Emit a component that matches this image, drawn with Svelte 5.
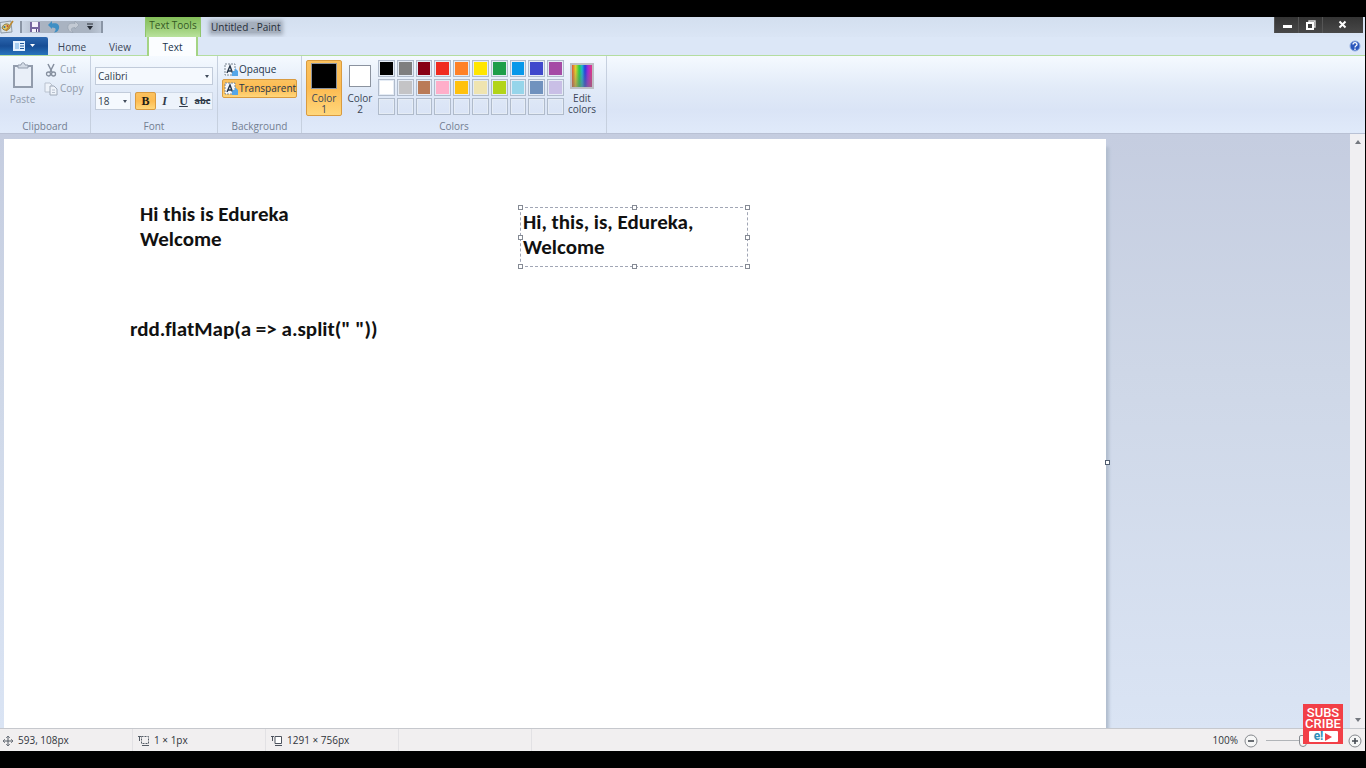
<script>
  const row1 = ['#000000', '#7f7f7f', '#880015', '#f02b20', '#ff8127', '#ffe600', '#1d9e49', '#0698ea', '#3f48cc', '#a54ba5'];
  const row2 = ['#ffffff', '#c4c4c6', '#ba7b57', '#ffaec9', '#ffc10d', '#efe4b0', '#b2d419', '#96d5ea', '#7092be', '#c9bfe6'];
  const names1 = ['Black', 'Gray', 'Dark red', 'Red', 'Orange', 'Yellow', 'Green', 'Turquoise', 'Indigo', 'Purple'];
  const names2 = ['White', 'Light gray', 'Brown', 'Rose', 'Gold', 'Light yellow', 'Lime', 'Light turquoise', 'Blue gray', 'Lavender'];
  const swatches = [
    ...row1.map((color, i) => ({ color, name: names1[i] })),
    ...row2.map((color, i) => ({ color, name: names2[i] })),
    ...Array.from({ length: 10 }, (_, i) => ({ color: '', name: `Custom ${i + 1}` }))
  ];
  const handles = ['nw', 'n', 'ne', 'w', 'e', 'sw', 's', 'se'];
  let zoom = $state(50);
  let opaque = $state(false);
  let note = $state('Hi, this, is, Edureka,\nWelcome');
</script>

{#snippet textIcon()}
  <svg width="14" height="14" viewBox="0 0 14 14" aria-hidden="true">
    <path d="M1 1h10v11H1z" fill="#f3f7fc" stroke="#7b8692" stroke-dasharray="2 1" />
    <path d="M3 10 6 3l2.5 7M4 8h4" fill="none" stroke="#29384b" stroke-width="1.4" />
    <path d="M9 8h2V5l3 3v5H8v-3z" fill="#55a6e8" />
  </svg>
{/snippet}

<div class="window">
  <header class="titlebar">
    <div class="quick">
      <svg width="14" height="14" viewBox="0 0 14 14" aria-hidden="true">
        <path d="M0 2.500 11 1 12 12 1 13z" fill="#d9e1e5" stroke="#8f9aa5" />
        <path d="M2 8c1-5 7-5 8-2 1 4-6 6-8 2z" fill="#e7c965" stroke="#8a7846" />
        <circle cx="4.500" cy="7" r="1" fill="#2870a9" />
        <circle cx="7.500" cy="6" r="1" fill="#bd493b" />
        <path d="m6 11 7-10" stroke="#bd8930" stroke-width="1.500" />
      </svg>
      <div class="tools">
        <button aria-label="Save">
          <svg width="12" height="12" viewBox="0 0 12 12"><path d="M1 1h10v10H1z" fill="#77679e" /><path d="M3 1h6v5H3zM3 8h6v3H3z" fill="#f5f2fb" /><path d="M7 8h1v3H7z" fill="#55477b" /></svg>
        </button>
        <button aria-label="Undo">
          <svg width="12" height="12" viewBox="0 0 12 12"><path d="M0 4 4 0v2.500c5-1 8 1 7 5-1 3-3 4-5 4 2-2 3-5-2-5V8z" fill="#3f8fc4" /></svg>
        </button>
        <button aria-label="Redo">
          <svg width="12" height="12" viewBox="0 0 12 12"><path d="M12 4 8 0v2.500c-5-1-8 1-7 5 1 3 3 4 5 4-2-2-3-5 2-5V8z" fill="#c3cad4" stroke="#8d98a6" stroke-width=".5" /></svg>
        </button>
        <button aria-label="Customize toolbar">
          <svg width="8" height="8" viewBox="0 0 8 8"><path d="M1 1h6" stroke="#242a33" /><path d="M1 3h6L4 7z" fill="#242a33" /></svg>
        </button>
      </div>
    </div>
    <div class="context">Text Tools</div>
    <div class="title">Untitled - Paint</div>
    <div class="controls">
      <button aria-label="Minimize"><svg width="12" height="12" viewBox="0 0 12 12"><path d="M2 6h9v3H2z" fill="#fff" /></svg></button>
      <button aria-label="Restore"><svg width="12" height="12" viewBox="0 0 12 12"><path d="M4 3V2h6v6H8" fill="none" stroke="#ddd" stroke-width="1.400" /><path d="M2 4h6v6H2z" fill="none" stroke="#fff" stroke-width="2" /></svg></button>
      <button aria-label="Close"><svg width="12" height="12" viewBox="0 0 12 12"><path d="m2.500 2.500 6 6m0-6-6 6" stroke="#fff" stroke-width="2" /></svg></button>
    </div>
  </header>

  <nav class="tabs">
    <button class="file" aria-label="Paint menu">
      <svg width="24" height="12" viewBox="0 0 24 12"><path d="M1 1h12v10H1z" fill="#e5f1ff" /><path d="M3 3h4v6H3z" fill="#a8cdf1" /><path d="M8 3.500h4M8 6h4M8 8.500h4" stroke="#235a9d" /><path d="M18 4h5l-2.500 3z" fill="#fff" /></svg>
    </button>
    <button>Home</button>
    <button>View</button>
    <button class="active">Text</button>
    <button class="help" aria-label="Help">
      <svg width="12" height="12" viewBox="0 0 12 12"><circle cx="6" cy="6" r="5" fill="#2c57bd" stroke="#93aee2" /><path d="M4 4.500c0-2.500 4-2.500 4 0C8 6 6 5.500 6 7.500M6 8.500V10" fill="none" stroke="#fff" stroke-width="1.300" /></svg>
    </button>
  </nav>

  <section class="ribbon" aria-label="Ribbon">
    <div class="group clipboard">
      <div class="body">
        <button class="paste">
          <svg width="24" height="28" viewBox="0 0 24 28"><path d="M3 5h18v21H3z" fill="#e9eff8" stroke="#929cac" stroke-width="2" /><path d="M7 7V4h3c0-3 4-3 4 0h3v3z" fill="#d3dbe6" stroke="#929cac" /></svg>
          Paste
        </button>
        <div class="stack">
          <button>
            <svg width="14" height="14" viewBox="0 0 14 14"><path d="m4 1 4 8m2-8L6 9" stroke="#858f9e" stroke-width="1.500" /><circle cx="4.500" cy="11" r="2" fill="none" stroke="#858f9e" stroke-width="1.300" /><circle cx="9.500" cy="11" r="2" fill="none" stroke="#858f9e" stroke-width="1.300" /></svg>
            Cut
          </button>
          <button>
            <svg width="14" height="14" viewBox="0 0 14 14"><path d="M1 1h5l2 2v7H1z" fill="#eef3fa" stroke="#b9c2cf" /><path d="M6 4h4l3 3v6H6z" fill="#eef3fa" stroke="#a0aab9" /><path d="M8 8h3M8 10.500h3" stroke="#b9c2cf" /></svg>
            Copy
          </button>
        </div>
      </div>
      <div class="caption">Clipboard</div>
    </div>

    <div class="group font">
      <div class="body">
        <div class="pick"><select aria-label="Font family"><option>Calibri</option></select></div>
        <div class="line">
          <div class="pick"><select aria-label="Font size"><option>18</option></select></div>
          <div class="styles">
            <button class="on b" aria-label="Bold">B</button>
            <button class="i" aria-label="Italic">I</button>
            <button class="u" aria-label="Underline">U</button>
            <button class="s" aria-label="Strikethrough">abc</button>
          </div>
        </div>
      </div>
      <div class="caption">Font</div>
    </div>

    <div class="group background">
      <div class="body">
        <button class:on={opaque} onclick={() => (opaque = true)}>{@render textIcon()}Opaque</button>
        <button class:on={!opaque} onclick={() => (opaque = false)}>{@render textIcon()}Transparent</button>
      </div>
      <div class="caption">Background</div>
    </div>

    <div class="group colors">
      <div class="body">
        <button class="well on"><span class="chip black"></span>Color<br />1</button>
        <button class="well"><span class="chip white"></span>Color<br />2</button>
        <div class="palette">
          {#each swatches as s}
            <button aria-label={s.name} style:background-color={s.color}></button>
          {/each}
        </div>
        <button class="well"><span class="rainbow"></span>Edit<br />colors</button>
      </div>
      <div class="caption">Colors</div>
    </div>
  </section>

  <main class="work">
    <div class="canvas">
      <p class="drawn first">Hi this is Edureka<br />Welcome</p>
      <p class="drawn second">rdd.flatMap(a =&gt; a.split(" "))</p>
      <div class="frame">
        <textarea aria-label="Text" spellcheck="false" bind:value={note}></textarea>
        {#each handles as h}<span class="handle {h}"></span>{/each}
      </div>
      <span class="handle edge"></span>
    </div>
    <div class="scroll">
      <button aria-label="Scroll up"><svg width="8" height="6" viewBox="0 0 8 6"><path d="M1 5 4 1l3 4z" fill="#73777e" /></svg></button>
      <button aria-label="Scroll down"><svg width="8" height="6" viewBox="0 0 8 6"><path d="m1 1 3 4 3-4z" fill="#73777e" /></svg></button>
    </div>
  </main>

  <footer class="status">
    <div class="cell">
      <svg width="12" height="12" viewBox="0 0 12 12" aria-hidden="true"><path d="M6 1v10M1 6h10" stroke="#555c66" /><path d="m4 3 2-2 2 2M4 9l2 2 2-2M3 4 1 6l2 2M9 4l2 2-2 2" fill="none" stroke="#555c66" stroke-width=".7" /></svg>
      593, 108px
    </div>
    <div class="cell">
      <svg width="12" height="12" viewBox="0 0 12 12" aria-hidden="true"><path d="M3.500 1.500h7v7h-7z" fill="none" stroke="#555c66" stroke-dasharray="2 1" /><path d="M1.500 1v5M0 1.500h3M4 10.500h7" stroke="#555c66" /></svg>
      1 × 1px
    </div>
    <div class="cell">
      <svg width="12" height="12" viewBox="0 0 12 12" aria-hidden="true"><path d="M4 1.500h6.500v7H4z" fill="#fff" stroke="#4d535e" /><path d="M1.500 1v5M0 1.500h3M4 10.500h7" stroke="#4d535e" /></svg>
      1291 × 756px
    </div>
    <div class="cell"></div>
    <div class="zoom">
      <span>100%</span>
      <button aria-label="Zoom out"><svg width="14" height="14" viewBox="0 0 14 14"><circle cx="7" cy="7" r="6" fill="#f6f6f6" stroke="#85888d" /><path d="M4 7h6" stroke="#454a52" stroke-width="1.600" /></svg></button>
      <input type="range" aria-label="Zoom" min="0" max="100" bind:value={zoom} />
      <button aria-label="Zoom in"><svg width="14" height="14" viewBox="0 0 14 14"><circle cx="7" cy="7" r="6" fill="#f6f6f6" stroke="#85888d" /><path d="M4 7h6M7 4v6" stroke="#454a52" stroke-width="1.600" /></svg></button>
    </div>
  </footer>

  <a class="subscribe" href="#subscribe">
    <span>SUBS</span>
    <span>CRIBE</span>
    <span class="mark">e!<svg width="7" height="8" viewBox="0 0 7 8" aria-hidden="true"><path d="M0 0v8l7-4z" fill="#f23f47" /></svg></span>
  </a>
</div>

<style>
  :global(body) {
    margin: 0;
    background: #000;
  }
  * {
    box-sizing: border-box;
  }
  .window {
    position: relative;
    height: 100vh;
    padding: 17px 1px 17px 0;
    display: flex;
    flex-direction: column;
    background: #000;
    font: 10px/11px 'Open Sans', 'Noto Sans', sans-serif;
    color: #3b4657;
  }
  button {
    margin: 0;
    padding: 0;
    border: 0;
    background: none;
    font: inherit;
    color: inherit;
  }
  svg {
    display: block;
    flex: none;
  }

  .titlebar {
    display: flex;
    height: 20px;
    flex: none;
    background: linear-gradient(#d3dfef, #dae5f5);
  }
  .quick {
    width: 145px;
    flex: none;
    display: flex;
    align-items: center;
    gap: 6px;
  }
  .tools {
    display: flex;
    align-items: center;
    gap: 7px;
    height: 12px;
    padding: 0 7px;
    border: solid #8a95a5;
    border-width: 0 2px;
    background: linear-gradient(90deg, #cad5e4, #a9b3c1 25%, #a9b3c1 85%, #bcc7d6);
  }
  .context {
    width: 56px;
    flex: none;
    text-align: center;
    line-height: 17px;
    color: #355924;
    background: linear-gradient(#83bd59, #9fd07b 60%, #b9e29d);
    border: solid #8fc56c;
    border-width: 0 1px;
  }
  .title {
    align-self: center;
    margin-left: 10px;
    color: #252d38;
    background: #a5afbd;
    box-shadow: 0 0 4px 2px #a5afbd;
  }
  .controls {
    margin-left: auto;
    margin-right: 2px;
    height: 16px;
    display: flex;
    background: linear-gradient(#343434, #484848);
  }
  .controls button {
    width: 24px;
    display: grid;
    place-items: center;
    border-left: 1px solid #555;
  }
  .controls button:last-child {
    width: 41px;
  }

  .tabs {
    display: flex;
    height: 19px;
    flex: none;
    background: #dce7f7;
    border-bottom: 1px solid #b4dda0;
  }
  .tabs button {
    width: 48px;
    padding-top: 2px;
  }
  .tabs .file {
    display: grid;
    place-items: center;
    padding: 0;
    background: linear-gradient(#2c67af, #174d95 50%, #2874bd);
    border-radius: 0 2px 0 0;
  }
  .tabs .active {
    width: 51px;
    height: 20px;
    margin-left: 3px;
    padding-top: 0;
    background: #fbfdff;
    border: solid #a4d484;
    border-width: 0 2px;
    color: #20324b;
  }
  .tabs .help {
    width: 20px;
    margin-left: auto;
    padding: 0;
    display: grid;
    place-items: center;
  }

  .ribbon {
    display: flex;
    height: 78px;
    flex: none;
    background: linear-gradient(#f5faff, #e2ebf8 40%, #dae4f6 70%, #e0eafa);
    border-bottom: 1px solid #b9c1d4;
  }
  .group {
    display: flex;
    flex-direction: column;
    padding: 4px 4px 0;
    border-right: 1px solid #c6d0df;
  }
  .group .body {
    flex: 1;
  }
  .caption {
    height: 12px;
    text-align: center;
    color: #727e91;
  }
  .on {
    background: linear-gradient(#fbc25f, #fdbb51 50%, #ffd77c);
    border: 1px solid #d99b40;
    border-radius: 2px;
  }

  .clipboard {
    width: 91px;
    color: #929cab;
  }
  .clipboard .body {
    display: flex;
    gap: 3px;
  }
  .paste {
    width: 37px;
    display: flex;
    flex-direction: column;
    align-items: center;
    justify-content: flex-start;
    gap: 5px;
    padding-top: 1px;
  }
  .stack button {
    display: flex;
    align-items: center;
    gap: 2px;
    height: 19px;
  }

  .font {
    width: 127px;
  }
  .font .body {
    display: flex;
    flex-direction: column;
    gap: 7px;
    padding-top: 7px;
  }
  .pick {
    position: relative;
    height: 18px;
  }
  .pick::after {
    content: '';
    position: absolute;
    right: 4px;
    top: 8px;
    border: solid transparent;
    border-width: 3px 2px 0;
    border-top-color: #414c5c;
  }
  select {
    display: block;
    width: 100%;
    height: 18px;
    padding: 0 2px;
    appearance: none;
    border: 1px solid #c1cbda;
    border-radius: 0;
    background: #f5f9fe;
    font: inherit;
    color: #303b4b;
  }
  .line {
    display: flex;
    gap: 4px;
  }
  .line .pick {
    width: 36px;
  }
  .styles {
    flex: 1;
    display: grid;
    grid-template-columns: repeat(4, 1fr);
    height: 18px;
    background: #edf3fb;
    border: 1px solid #ced8e6;
    font: bold 12px/14px 'Liberation Serif', serif;
    color: #303a49;
  }
  .styles .b {
    margin: -1px;
    color: #241d16;
  }
  .styles .i {
    font-style: italic;
  }
  .styles .u {
    text-decoration: underline;
  }
  .styles .s {
    font: bold 9px/14px 'Open Sans', sans-serif;
    text-decoration: line-through;
  }

  .background {
    width: 84px;
  }
  .background button {
    width: 75px;
    height: 19px;
    display: flex;
    align-items: center;
    gap: 1px;
    padding: 0 1px;
    border: 1px solid transparent;
    color: #26354b;
  }
  .background .on {
    border-color: #d99b40;
  }

  .colors {
    width: 305px;
  }
  .colors .body {
    display: flex;
    align-items: flex-start;
  }
  .well {
    width: 36px;
    height: 56px;
    padding: 1px 0 0;
    display: block;
    flex: none;
    text-align: center;
    border: 1px solid transparent;
  }
  .well.on {
    border-color: #d99b40;
  }
  .chip,
  .rainbow {
    display: block;
    width: 26px;
    height: 26px;
    margin: 1px auto 4px;
    border: 1px solid #8b939f;
  }
  .chip.black {
    background: #000;
  }
  .chip.white {
    width: 22px;
    height: 22px;
    margin: 3px auto 6px;
    background: #fff;
  }
  .palette {
    width: 186px;
    display: grid;
    grid-template-columns: repeat(10, 1fr);
    gap: 2px;
    flex: none;
  }
  .palette button {
    height: 17px;
    border: 1px solid #b0bbcb;
    box-shadow: inset 0 0 0 1px #e5ecf5;
  }
  .rainbow {
    width: 24px;
    border: 2px solid #bdbfc5;
    background:
      linear-gradient(transparent 20%, #7778 100%),
      linear-gradient(90deg, #df5734, #dfd12d 18%, #28ce46 36%, #20b6cf 50%, #243fe0 65%, #a329d6 80%, #e43980);
  }

  .work {
    flex: 1;
    min-height: 0;
    display: flex;
    background: linear-gradient(#c5cde0, #ced7e7 40%, #dae4f4);
  }
  .canvas {
    position: relative;
    flex: 1;
    margin: 5px 244px 0 4px;
    background: #fff;
    box-shadow: 3px 8px 3px #b1bdce;
    clip-path: inset(0 -8px 0 0);
  }
  .drawn,
  textarea {
    margin: 0;
    font: bold 21px/25px Carlito, Lato, sans-serif;
    font-variant-ligatures: none;
    color: #111;
  }
  .drawn {
    position: absolute;
    white-space: nowrap;
  }
  .first {
    left: 136px;
    top: 63px;
  }
  .second {
    left: 126px;
    top: 178px;
  }
  .frame {
    position: absolute;
    left: 516px;
    top: 68px;
    width: 228px;
    height: 60px;
    border: 1px dashed #a1a6b5;
  }
  textarea {
    display: block;
    width: 100%;
    height: 100%;
    padding: 2px;
    border: 0;
    outline: 0;
    resize: none;
    overflow: hidden;
    background: transparent;
  }
  .handle {
    position: absolute;
    width: 5px;
    height: 5px;
    border: 1px solid #858a94;
    background: #fff;
  }
  .nw, .n, .ne { top: -3px; }
  .w, .e { top: 27px; }
  .sw, .s, .se { bottom: -3px; }
  .nw, .w, .sw { left: -3px; }
  .n, .s { left: 111px; }
  .ne, .e, .se { right: -3px; }
  .edge {
    right: -4px;
    top: 321px;
    border-color: #4f5c6e;
  }
  .scroll {
    width: 15px;
    flex: none;
    display: flex;
    flex-direction: column;
    justify-content: space-between;
    background: #f0eff2;
  }
  .scroll button {
    height: 16px;
    display: grid;
    place-items: center;
  }

  .status {
    height: 23px;
    flex: none;
    display: flex;
    align-items: center;
    border-top: 1px solid #c6c8cd;
    background: #f1eff0;
    color: #30343b;
  }
  .cell {
    width: 133px;
    height: 22px;
    padding: 1px 0 0 2px;
    display: flex;
    align-items: center;
    gap: 4px;
    border-right: 1px solid #e2e1e4;
  }
  .cell + .cell {
    padding-left: 5px;
  }
  .zoom {
    margin-left: auto;
    margin-right: 3px;
    padding-top: 1px;
    display: flex;
    align-items: center;
    gap: 6px;
  }
  input[type='range'] {
    width: 78px;
    height: 14px;
    margin: 0;
    appearance: none;
    background: linear-gradient(#b1b4b8, #b1b4b8) center / 74px 1px no-repeat;
  }
  input[type='range']::-webkit-slider-thumb {
    appearance: none;
    width: 8px;
    height: 12px;
    border: 1px solid #888b91;
    border-radius: 2px 2px 4px 4px;
    background: #f6f6f6;
  }

  .subscribe {
    position: absolute;
    right: 23px;
    bottom: 24px;
    width: 40px;
    height: 40px;
    padding-top: 3px;
    display: flex;
    flex-direction: column;
    align-items: center;
    background: #f23f47;
    color: #fff;
    font: 500 13px/11px Roboto, sans-serif;
    text-decoration: none;
  }
  .mark {
    width: 29px;
    height: 11px;
    margin-top: 2px;
    display: flex;
    align-items: center;
    justify-content: center;
    gap: 2px;
    border-radius: 1px;
    background: #fff;
    color: #2d8db6;
    font-weight: bold;
    font-size: 12px;
  }
</style>
